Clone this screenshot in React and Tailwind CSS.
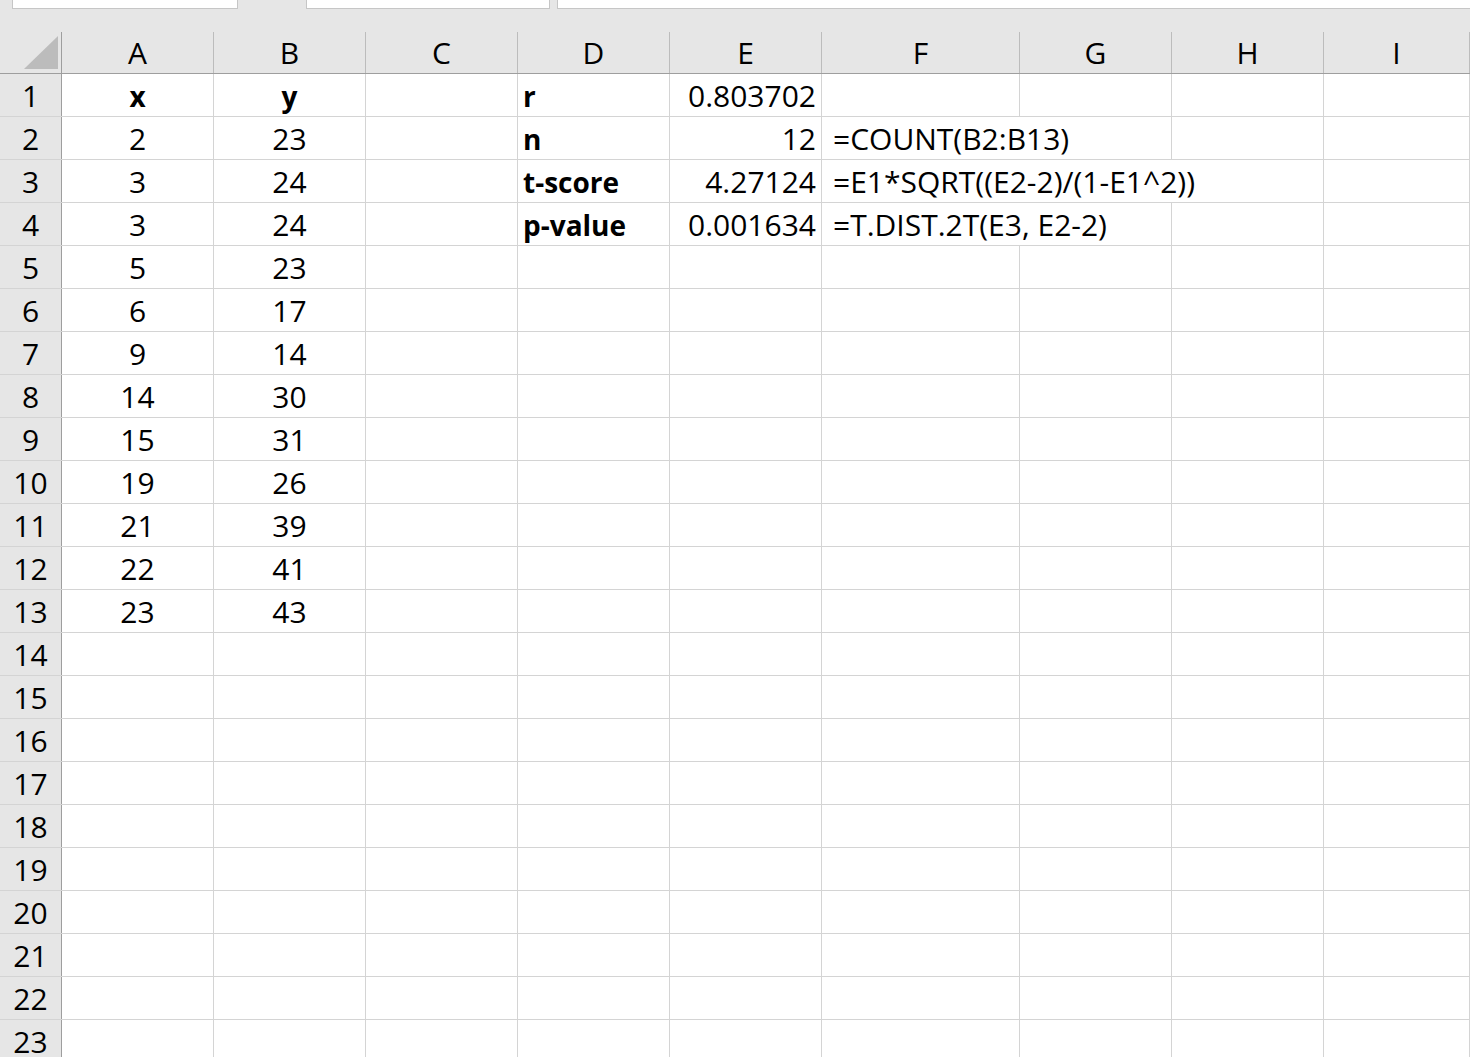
import React from 'react';

const FONT = { fontFamily: '"Open Sans", "Noto Sans", sans-serif' };

// column letters with their widths (right border included)
const columns = [
  { key: 'A', w: 'w-[152px]' },
  { key: 'B', w: 'w-[152px]' },
  { key: 'C', w: 'w-[152px]' },
  { key: 'D', w: 'w-[152px]' },
  { key: 'E', w: 'w-[152px]' },
  { key: 'F', w: 'w-[198px]' },
  { key: 'G', w: 'w-[152px]' },
  { key: 'H', w: 'w-[152px]' },
  { key: 'I', w: 'flex-1' },
];

const xs = [2, 3, 3, 5, 6, 9, 14, 15, 19, 21, 22, 23];
const ys = [23, 24, 24, 23, 17, 14, 30, 31, 26, 39, 41, 43];

const stats = [
  { label: 'r', value: '0.803702', formula: '' },
  { label: 'n', value: '12', formula: '=COUNT(B2:B13)' },
  { label: 't-score', value: '4.27124', formula: '=E1*SQRT((E2-2)/(1-E1^2))' },
  { label: 'p-value', value: '0.001634', formula: '=T.DIST.2T(E3, E2-2)' },
];

// which right borders get covered by formula text spilling over
const spill = {
  2: ['F'],
  3: ['F', 'G'],
  4: ['F'],
};

function cellContent(row, col) {
  if (row === 1 && col === 'A') return { text: 'x', bold: true, align: 'center' };
  if (row === 1 && col === 'B') return { text: 'y', bold: true, align: 'center' };
  if (row >= 2 && row <= 13 && col === 'A') return { text: xs[row - 2], align: 'center' };
  if (row >= 2 && row <= 13 && col === 'B') return { text: ys[row - 2], align: 'center' };
  const s = stats[row - 1];
  if (s) {
    if (col === 'D') return { text: s.label, bold: true, align: 'left' };
    if (col === 'E') return { text: s.value, align: 'right' };
    if (col === 'F' && s.formula) return { text: s.formula, align: 'formula' };
  }
  return null;
}

const alignClass = {
  center: 'justify-center',
  left: 'justify-start pl-[5px]',
  right: 'justify-end pr-[5px]',
  formula: 'justify-start pl-[11px]',
};

function Cell({ row, col }) {
  const c = cellContent(row, col.key);
  const hidden = (spill[row] || []).includes(col.key);
  return (
    <div
      className={`${col.w} h-full shrink-0 flex items-center pt-[2px] whitespace-nowrap overflow-visible ${
        hidden ? 'border-r border-r-transparent' : 'border-r border-[#d4d4d4]'
      } ${c ? alignClass[c.align] : ''}`}
    >
      {c && (
        <span
          className={`leading-none text-black ${c.bold ? 'font-bold text-[28px]' : 'text-[30px]'}`}
        >
          {c.text}
        </span>
      )}
    </div>
  );
}

function Row({ n }) {
  return (
    <div className="flex h-[43px] border-b border-[#d4d4d4]">
      <div className="w-[62px] shrink-0 h-full pt-[2px] bg-[#e6e6e6] border-r border-[#9e9e9e] flex items-center justify-center text-[30px] leading-none text-black">
        {n}
      </div>
      {columns.map((col) => (
        <Cell key={col.key} row={n} col={col} />
      ))}
    </div>
  );
}

export default function App() {
  const rows = Array.from({ length: 23 }, (_, i) => i + 1);

  return (
    <div className="w-[1470px] h-[1057px] overflow-hidden bg-white" style={FONT}>
      {/* name box / formula bar edges at the very top */}
      <div className="h-[9px] bg-[#e6e6e6] flex">
        <div className="ml-[12px] w-[226px] h-[9px] bg-white border-x border-b border-[#c6c6c6]" />
        <div className="ml-[68px] w-[244px] h-[9px] bg-white border-x border-b border-[#c6c6c6]" />
        <div className="ml-[7px] flex-1 h-[9px] bg-white border-l border-b border-[#c6c6c6]" />
      </div>

      {/* column headers */}
      <div className="bg-[#e6e6e6] pt-[23px] border-b border-[#9e9e9e]">
        <div className="flex h-[41px]">
          <div className="w-[62px] shrink-0 h-full border-r border-[#9e9e9e] relative">
            <svg className="absolute left-[23px] top-[3px]" width="36" height="35" viewBox="0 0 36 35">
              <polygon points="1,34 35,1 35,34" fill="#bcbcbc" />
            </svg>
          </div>
          {columns.map((col) => (
            <div
              key={col.key}
              className={`${col.w} shrink-0 h-full border-r border-[#bcbcbc] flex items-center justify-center text-[30px] leading-none text-black`}
            >
              {col.key}
            </div>
          ))}
        </div>
      </div>

      {rows.map((n) => (
        <Row key={n} n={n} />
      ))}
    </div>
  );
}
